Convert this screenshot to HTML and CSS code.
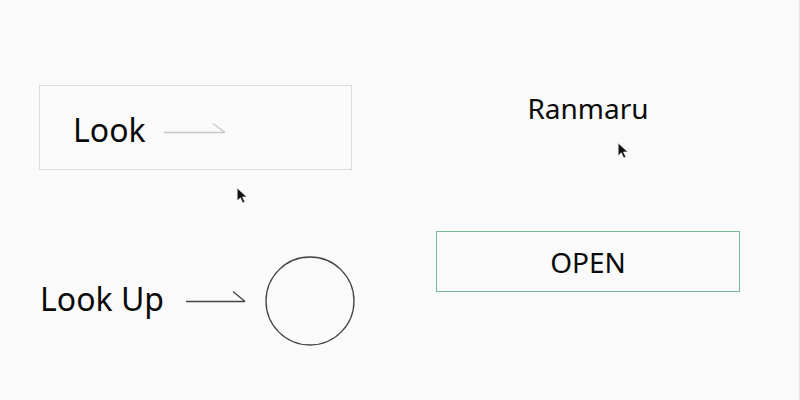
FILE: index.html
```html
<!DOCTYPE html>
<html lang="en">
<head>
  <meta charset="UTF-8" />
  <meta name="viewport" content="width=device-width, initial-scale=1" />
  <title>Look Up</title>
  <link rel="stylesheet" href="styles.css">
</head>
<body>
  <div class="stage">
    <div class="look-card">
      <span class="look-text">Look</span>
      <svg class="arrow arrow-light" width="62" height="20" viewBox="0 0 62 20">
        <path d="M0 11.5 H61 M49 2.5 L61 11.5" />
      </svg>
    </div>

    <div class="name">Ranmaru</div>

    <div class="lookup-row">
      <span class="lookup-text">Look Up</span>
      <svg class="arrow arrow-dark" width="60" height="20" viewBox="0 0 60 20">
        <path d="M0 10.5 H59 M47 0.5 L59 10.5" />
      </svg>
      <svg class="ring" width="90" height="90" viewBox="0 0 90 90">
        <circle cx="45" cy="45" r="44" />
      </svg>
    </div>

    <div class="open-btn">OPEN</div>

    <!-- mouse pointers caught in the capture -->
    <svg class="pointer pointer-left" width="11" height="16" viewBox="0 0 10 15">
      <path d="M0 0 L0 12 L3 9.2 L5.2 14 L7.2 13.1 L5 8.4 L9 8.4 Z" />
    </svg>
    <svg class="pointer pointer-right" width="11" height="16" viewBox="0 0 10 15">
      <path d="M0 0 L0 12 L3 9.2 L5.2 14 L7.2 13.1 L5 8.4 L9 8.4 Z" />
    </svg>
  </div>
</body>
</html>
```

FILE: styles.css
```css
body {
  margin: 0;
  font-family: 'Noto Sans', 'Open Sans', sans-serif;
  background: #fafafa;
  color: #0a0a0a;
}

.stage {
  position: relative;
  box-sizing: border-box;
  height: 400px;
  padding: 85px 0 0 39px;
  display: grid;
  grid-template-columns: 313px 304px;
  grid-template-rows: 85px auto;
  column-gap: 84px;
  row-gap: 61px;
  border-top: 1px solid #ececec;
  border-right: 1px solid #e4e4e4;
  margin-top: -1px;
}

.look-card {
  box-sizing: border-box;
  height: 85px;
  border: 1px solid #dcdcdc;
  padding: 4px 0 0 33px;
  display: flex;
  align-items: center;
}

.look-text {
  font-size: 32px;
}

.arrow {
  flex-shrink: 0;
  fill: none;
  stroke-width: 1.3;
}

.arrow-light {
  margin-left: 18px;
  margin-top: 3px;
  stroke: #c6c6c6;
}

.arrow-dark {
  margin-left: 22px;
  stroke: #444;
}

.name {
  font-size: 28px;
  text-align: center;
  margin-top: 4px;
}

.lookup-row {
  display: flex;
  align-items: center;
  margin-top: 25px;
  align-self: start;
}

.lookup-text {
  font-size: 32px;
  margin-left: 1px;
  padding-bottom: 6px;
  white-space: nowrap;
}

.ring {
  flex-shrink: 0;
  margin-left: 19px;
  fill: none;
  stroke: #444;
  stroke-width: 1.3;
}

.open-btn {
  box-sizing: border-box;
  height: 61px;
  border: 1px solid #7bb797;
  font-size: 28px;
  display: flex;
  align-items: center;
  justify-content: center;
  align-self: start;
}

.pointer {
  position: absolute;
  fill: #111;
  stroke: #fafafa;
  stroke-width: 0.6;
}

.pointer-left {
  left: 237px;
  top: 188px;
}

.pointer-right {
  left: 618px;
  top: 143px;
}
```
